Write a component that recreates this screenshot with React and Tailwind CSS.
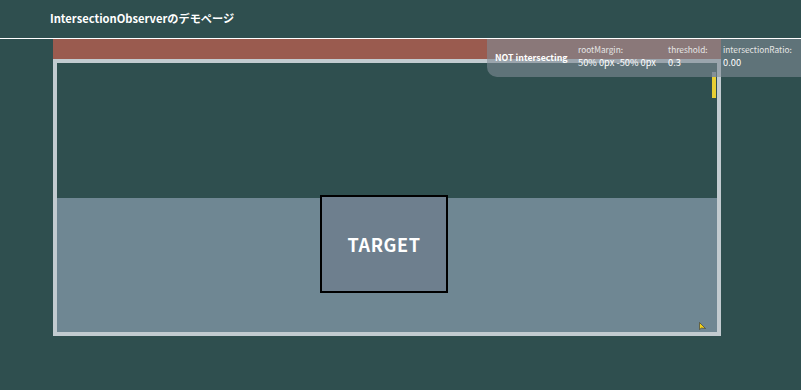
export default function App() {
  return (
    <div
      className="relative h-[390px] w-full overflow-hidden bg-[#2f4f4f] text-white"
      style={{ fontFamily: '"Noto Sans CJK JP", "Noto Sans", sans-serif' }}
    >
      <header className="flex h-[39px] items-center border-b border-white pl-[50px]">
        <h1 className="text-[11.2px] font-bold leading-none">IntersectionObserverのデモページ</h1>
      </header>

      <main className="pl-[53px]">
        <div className="h-[20px] w-[668px] bg-[#9a5b4f]" />
        <div className="relative flex h-[277px] w-[668px] flex-col border-4 border-[#c2cbd0]">
          <div className="h-[135px]" />
          <div className="flex flex-1 bg-[#6f8793] pl-[263px]">
            <div className="-mt-[3px] flex h-[98px] w-[128px] items-center justify-center border-2 border-black bg-[#6e7f8e]">
              <span className="text-[18px] font-bold tracking-[0.6px]">TARGET</span>
            </div>
          </div>

          {/* scrollbar */}
          <div className="absolute right-[1px] top-[9px] flex w-[4px] flex-col">
            <div className="h-[5px] bg-[#8a9799]" />
            <div className="h-[21px] bg-[#e8cf35]" />
          </div>

          {/* cursor */}
          <svg className="absolute left-[642px] top-[259px]" width="7" height="9" viewBox="0 0 7 9">
            <path d="M0.5 0.5 L0.5 7.5 L2.5 6 L6.5 6.5 Z" fill="#f2d21b" stroke="#333" strokeWidth="0.6" />
          </svg>
        </div>
      </main>

      <div className="absolute left-[487px] right-0 top-[39px] flex h-[38px] items-center rounded-bl-[10px] bg-[rgba(128,140,150,0.6)] pb-[4px] pl-[8px]">
        <span className="mt-[4px] w-[83px] text-[8.8px] font-bold">NOT intersecting</span>
        <div className="flex w-[90px] flex-col gap-[5px]">
          <span className="text-[8.3px] leading-none text-[#e6e6e6]">rootMargin:</span>
          <span className="text-[9.3px] leading-none">50% 0px -50% 0px</span>
        </div>
        <div className="flex w-[55px] flex-col gap-[5px]">
          <span className="text-[8.3px] leading-none text-[#e6e6e6]">threshold:</span>
          <span className="text-[9.3px] leading-none">0.3</span>
        </div>
        <div className="flex flex-col gap-[5px]">
          <span className="text-[8.3px] leading-none text-[#e6e6e6]">intersectionRatio:</span>
          <span className="text-[9.3px] leading-none">0.00</span>
        </div>
      </div>
    </div>
  );
}
